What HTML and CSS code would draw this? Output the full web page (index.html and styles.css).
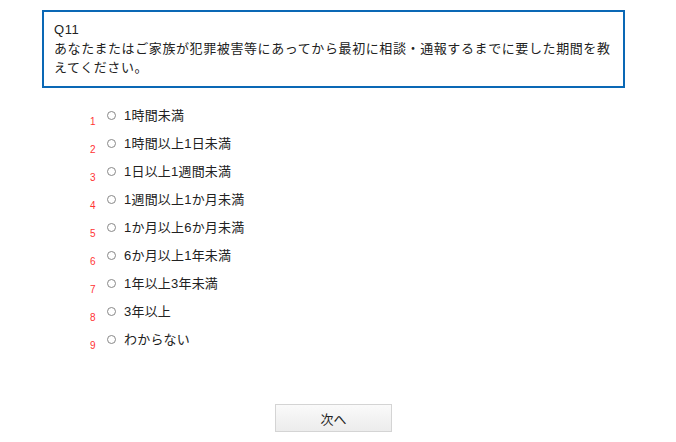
FILE: index.html
```html
<!DOCTYPE html>
<html lang="ja">
<head>
  <meta charset="UTF-8">
  <title>Q11</title>
  <link rel="stylesheet" href="styles.css">
</head>
<body>
  <div class="page">
    <div class="question">
      <p>Q11</p>
      <p>あなたまたはご家族が犯罪被害等にあってから最初に相談・通報するまでに要した期間を教えてください。</p>
    </div>

    <ul class="choices">
      <li><span class="num">1</span><span class="radio"></span><span class="label">1時間未満</span></li>
      <li><span class="num">2</span><span class="radio"></span><span class="label">1時間以上1日未満</span></li>
      <li><span class="num">3</span><span class="radio"></span><span class="label">1日以上1週間未満</span></li>
      <li><span class="num">4</span><span class="radio"></span><span class="label">1週間以上1か月未満</span></li>
      <li><span class="num">5</span><span class="radio"></span><span class="label">1か月以上6か月未満</span></li>
      <li><span class="num">6</span><span class="radio"></span><span class="label">6か月以上1年未満</span></li>
      <li><span class="num">7</span><span class="radio"></span><span class="label">1年以上3年未満</span></li>
      <li><span class="num">8</span><span class="radio"></span><span class="label">3年以上</span></li>
      <li><span class="num">9</span><span class="radio"></span><span class="label">わからない</span></li>
    </ul>

    <div class="actions">
      <button class="next" type="button">次へ</button>
    </div>
  </div>
</body>
</html>
```

FILE: styles.css
```css
body {
  margin: 0;
  padding: 10px 0 0;
  background: #fff;
  color: #222;
  font-family: "Liberation Sans", "Noto Sans CJK JP", sans-serif;
  font-size: 13px;
}
.page {
  width: 583px;
  margin-left: 42px;
}
.question {
  border: 2px solid #0a68b5;
  padding: 8px 8px 9px 10px;
  line-height: 19px;
  letter-spacing: 0.6px;
}
.question p {
  margin: 0;
}
.choices {
  list-style: none;
  margin: 13px 0 0;
  padding: 0 0 0 48px;
}
.choices li {
  display: flex;
  align-items: center;
  height: 28px;
}
.num {
  width: 17px;
  font-size: 10px;
  color: #f33;
  align-self: flex-end;
  line-height: 10px;
  padding-bottom: 2px;
}
.radio {
  width: 7px;
  height: 7px;
  border: 1px solid #888;
  border-radius: 50%;
  margin-right: 8px;
}
.label {
  line-height: 19px;
  letter-spacing: 0.2px;
}
.actions {
  display: flex;
  justify-content: center;
  margin-top: 51px;
}
.next {
  width: 117px;
  height: 28px;
  border: 1px solid #d4d4d4;
  background: linear-gradient(#fafafa, #ececec);
  font-family: "Liberation Sans", "Noto Sans CJK JP", sans-serif;
  font-size: 13px;
  color: #222;
}
```
